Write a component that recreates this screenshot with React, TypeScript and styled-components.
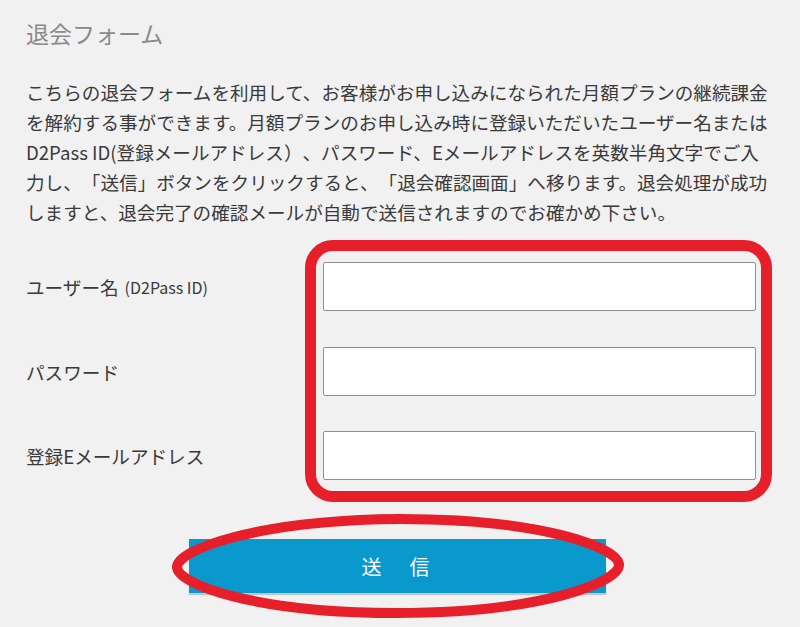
import React from 'react';
import styled, {createGlobalStyle} from 'styled-components';

const GlobalStyle = createGlobalStyle`
	html, body {
		margin: 0;
		padding: 0;
		background: #f1f1f1;
	}
	body {
		font-family: "Noto Sans CJK JP", "Noto Sans", sans-serif;
		color: #3a3a3a;
		text-spacing-trim: space-all;
	}
`;

const fields = [
	{id: 'user', label: 'ユーザー名', note: '(D2Pass ID)', type: 'text'},
	{id: 'pass', label: 'パスワード', note: '', type: 'password'},
	{id: 'mail', label: '登録Eメールアドレス', note: '', type: 'email'},
];

const intro = [
	'こちらの退会フォームを利用して、お客様がお申し込みになられた月額プランの継続課金',
	'を解約する事ができます。月額プランのお申し込み時に登録いただいたユーザー名または',
	'D2Pass ID(登録メールアドレス）、パスワード、Eメールアドレスを英数半角文字でご入',
	'力し、「送信」ボタンをクリックすると、「退会確認画面」へ移ります。退会処理が成功',
	'しますと、退会完了の確認メールが自動で送信されますのでお確かめ下さい。',
];

export default function App() {
	return (
		<>
			<GlobalStyle />
			<Page>
				<Title>退会フォーム</Title>
				<Intro>
					{intro.map((line) => (
						<span key={line}>
							{line}
							<br />
						</span>
					))}
				</Intro>
				<Form onSubmit={(e) => e.preventDefault()}>
					<Labels>
						{fields.map(({id, label, note}) => (
							<Label key={id} htmlFor={id}>
								{label}
								{note && <Note>{note}</Note>}
							</Label>
						))}
					</Labels>
					<Highlight>
						{fields.map(({id, type}) => (
							<Input key={id} id={id} type={type} />
						))}
					</Highlight>
				</Form>
				<ButtonRow>
					<ButtonWrap>
						<SubmitButton type="button">送　信</SubmitButton>
						<Circle viewBox="0 0 452 104" aria-hidden="true">
							<path
								d="M5 53 C5 36, 84 6, 228 5 C372 5, 447 34, 447 51 C447 68, 370 99, 224 99 C82 99, 5 70, 5 53 Z"
								fill="none"
								stroke="#e61f2b"
								strokeWidth="10"
							/>
						</Circle>
					</ButtonWrap>
				</ButtonRow>
			</Page>
		</>
	);
}

const Page = styled.div`
	padding: 18px 0 0 26px;
	box-sizing: border-box;
	width: 800px;
	height: 627px;
	overflow: hidden;
`;

const Title = styled.h1`
	margin: 0;
	font-size: 23px;
	line-height: 30px;
	font-weight: 400;
	color: #8a8a8a;
`;

const Intro = styled.p`
	margin: 29px 0 0;
	font-size: 18.6px;
	line-height: 30px;
	white-space: nowrap;
	color: #3a3a3a;
`;

const Form = styled.form`
	display: grid;
	grid-template-columns: 279px 467px;
	margin-top: 13px;
`;

const Labels = styled.div`
	display: flex;
	flex-direction: column;
	gap: 35.5px;
	padding-top: 22px;
`;

const Label = styled.label`
	display: flex;
	align-items: center;
	height: 49px;
	font-size: 18.6px;
	color: #3a3a3a;
`;

const Note = styled.span`
	font-size: 16px;
	margin-left: 6px;
`;

const Highlight = styled.div`
	display: flex;
	flex-direction: column;
	gap: 35.5px;
	padding: 11px 5px 11px 7px;
	border: 11px solid #e61f2b;
	border-radius: 28px;
`;

const Input = styled.input`
	box-sizing: border-box;
	width: 100%;
	height: 49px;
	margin: 0;
	border: 1px solid #8f8f8f;
	border-radius: 2px;
	background: #fff;
	font: inherit;
	font-size: 16px;
	padding: 0 10px;
	outline: none;
`;

const ButtonRow = styled.div`
	display: flex;
	justify-content: center;
	margin-top: 37px;
	padding-right: 31px;
`;

const ButtonWrap = styled.div`
	position: relative;
	width: 417px;
	height: 54px;
`;

const SubmitButton = styled.button`
	width: 100%;
	height: 100%;
	border: none;
	background: #0a99cd;
	color: #fff;
	font-family: inherit;
	font-size: 20px;
	letter-spacing: 4px;
	box-shadow: 0 2px 1px rgba(0, 0, 0, 0.18);
	cursor: pointer;
`;

const Circle = styled.svg`
	position: absolute;
	left: -17.5px;
	top: -25px;
	width: 452px;
	height: 104px;
	pointer-events: none;
`;
